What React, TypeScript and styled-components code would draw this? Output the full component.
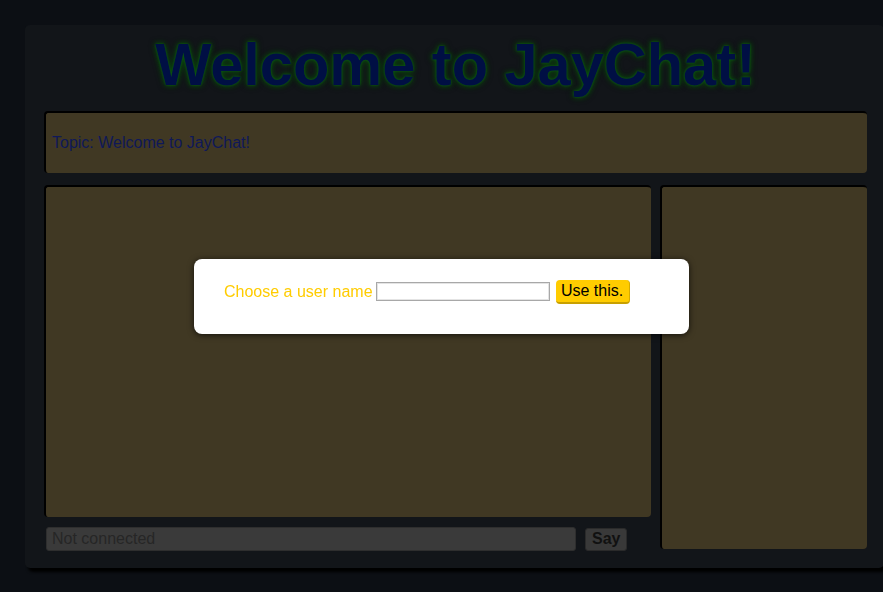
import React from 'react';
import styled, { createGlobalStyle } from 'styled-components';

const GlobalStyle = createGlobalStyle`
  html, body {
    margin: 0;
    padding: 0;
    background: #0c0f14;
    overflow: hidden;
    font-family: "Liberation Sans", Arial, sans-serif;
  }
`;

const Page = styled.div`
  width: 883px;
  height: 592px;
  padding: 25px 0 0 25px;
  box-sizing: border-box;
`;

const Container = styled.div`
  width: 859px;
  box-sizing: border-box;
  padding: 6px 17px 17px 19px;
  background: #121519;
  border-radius: 5px;
  box-shadow: 3px 4px 3px #000;
`;

const Title = styled.h1`
  margin: 0 0 12px;
  text-align: center;
  font-size: 59.5px;
  line-height: 68px;
  font-weight: bold;
  color: #000f44;
  text-shadow: 0 0 2px #0d6012, 0 0 5px #0b500e, 0 0 7px #083a0a;
`;

const Panel = styled.div<{ $height: number }>`
  box-sizing: border-box;
  height: ${p => p.$height}px;
  background: #403823;
  border-top: 2px solid #000;
  border-left: 2px solid #000;
  border-radius: 4px;
`;

const Topic = styled(Panel)`
  display: flex;
  align-items: center;
  padding: 0 6px;
  font-size: 16px;
  color: #0f1858;
`;

const Body = styled.div`
  display: grid;
  grid-template-columns: 607px 207px;
  gap: 9px;
  margin-top: 12px;
`;

const Column = styled.div`
  display: flex;
  flex-direction: column;
`;

const SayRow = styled.form`
  display: flex;
  align-items: center;
  gap: 9px;
  margin-top: 10px;
  padding-left: 2px;
`;

const SayInput = styled.input`
  width: 530px;
  height: 24px;
  box-sizing: border-box;
  padding: 0 5px;
  background: #3a3a3a;
  border: 1px solid #2e2e2e;
  border-radius: 3px;
  font: 16px "Liberation Sans", Arial, sans-serif;
  color: #222;
  &::placeholder {
    color: #262626;
  }
`;

const SayButton = styled.button`
  height: 23px;
  padding: 0 6px;
  background: #393939;
  border: 1px solid #2a2a2a;
  border-radius: 3px;
  font: bold 16px "Liberation Sans", Arial, sans-serif;
  color: #111;
`;

const Overlay = styled.div`
  position: fixed;
  inset: 0;
  display: flex;
  align-items: center;
  justify-content: center;
`;

const Dialog = styled.div`
  width: 495px;
  height: 75px;
  box-sizing: border-box;
  padding: 21px 30px 0;
  background: #fff;
  border-radius: 8px;
  box-shadow: 0 1px 6px rgba(0, 0, 0, 0.7);
  display: flex;
  align-items: flex-start;
  gap: 3px;
`;

const Label = styled.label`
  font-size: 16px;
  line-height: 24px;
  color: #ffcc00;
`;

const NameInput = styled.input`
  width: 174px;
  height: 19px;
  box-sizing: border-box;
  margin-top: 2px;
  border: 1px solid #a8a8a8;
  box-shadow: inset 0 0 0 1px #e4e4e4;
  padding: 0 3px;
`;

const UseButton = styled.button`
  margin-left: 3px;
  width: 74px;
  height: 24px;
  padding: 0;
  background: #ffcc00;
  border: none;
  border-bottom: 2px solid #c8a000;
  border-right: 1px solid #d6ab00;
  border-radius: 4px;
  font: 16px "Liberation Sans", Arial, sans-serif;
  color: #000;
`;

export default function App() {
  return (
    <>
      <GlobalStyle />
      <Page>
        <Container>
          <Title>Welcome to JayChat!</Title>
          <Topic $height={62}>Topic: Welcome to JayChat!</Topic>
          <Body>
            <Column>
              <Panel $height={332} />
              <SayRow onSubmit={e => e.preventDefault()}>
                <SayInput placeholder="Not connected" disabled />
                <SayButton type="submit">Say</SayButton>
              </SayRow>
            </Column>
            <Panel $height={364} />
          </Body>
        </Container>
      </Page>
      <Overlay>
        <Dialog>
          <Label htmlFor="uname">Choose a user name</Label>
          <NameInput id="uname" type="text" />
          <UseButton type="button">Use this.</UseButton>
        </Dialog>
      </Overlay>
    </>
  );
}
